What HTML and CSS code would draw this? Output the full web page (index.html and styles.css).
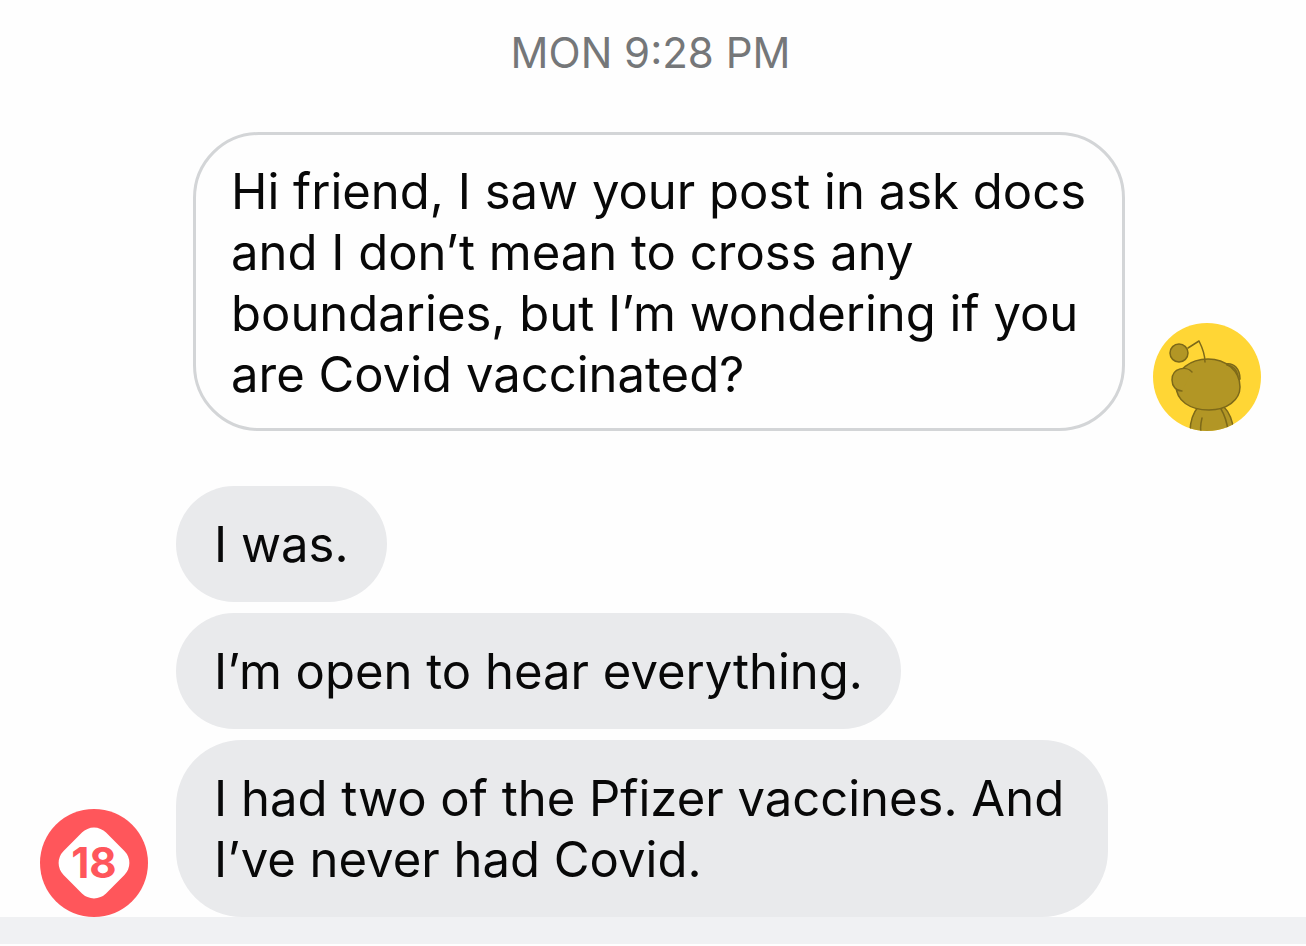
FILE: index.html
```html
<!DOCTYPE html>
<html lang="en">
<head>
  <meta charset="UTF-8" />
  <meta name="viewport" content="width=device-width, initial-scale=1.0"/>
  <title>Chat</title>
  <link rel="stylesheet" href="styles.css">
</head>
<body>
  <main class="chat">
    <time class="date">MON 9:28 PM</time>

    <div class="row sent">
      <p class="bubble">Hi friend, I saw your post in ask docs and I don’t mean to cross any boundaries, but I’m wondering if you are Covid vaccinated?</p>
      <svg class="avatar" viewBox="0 0 108 108" role="img" aria-label="My avatar">
        <defs>
          <clipPath id="round"><circle cx="54" cy="54" r="54"/></clipPath>
        </defs>
        <circle cx="54" cy="54" r="54" fill="#ffd635"/>
        <g clip-path="url(#round)" fill="#b29625" stroke="#7d6919" stroke-width="1.5" stroke-linecap="round" stroke-linejoin="round">
          <!-- body -->
          <path d="M45 84c-5 6-8 13-8 26h44c-1-11-4-20-10-26z"/>
          <path d="M49 95c-1 4-2 9-1 14M68 86c3 5 6 13 7 22" fill="none"/>
          <!-- ears and head -->
          <path d="M72 41c9-2 15 5 15 15l-4 4z"/>
          <path d="M55 36c18 0 32 12 32 28 0 13-13 23-31 23-19 0-33-9-33-25 0-15 14-26 32-26z"/>
          <path d="M39 49c-5-6-20-5-20 8 0 6 4 11 10 11"/>
          <path d="M74 42c6 1 10 5 11 11" fill="none"/>
          <!-- antenna -->
          <path d="M35 25l11-7c3 6 6 14 6 21" fill="none"/>
          <circle cx="26" cy="30" r="9"/>
        </g>
      </svg>
    </div>

    <div class="row received">
      <svg class="avatar" viewBox="0 0 108 108" role="img" aria-label="18">
        <circle cx="54" cy="54" r="54" fill="#ff565b"/>
        <rect x="24" y="24" width="60" height="60" rx="17" fill="#fff" transform="rotate(45 54 54)"/>
        <text class="badge" x="54" y="69" text-anchor="middle">18</text>
      </svg>
      <div class="group">
        <p class="bubble">I was.</p>
        <p class="bubble">I’m open to hear everything.</p>
        <p class="bubble">I had two of the Pfizer vaccines. And I’ve never had Covid.</p>
      </div>
    </div>
  </main>
  <footer class="bottom-bar"></footer>
</body>
</html>
```

FILE: styles.css
```css
* {
  box-sizing: border-box;
}

body {
  margin: 0;
  font-family: Inter, "Liberation Sans", sans-serif;
  background-color: #fefefe;
  color: #080808;
}

.chat {
  display: flex;
  flex-direction: column;
  padding: 29px 45px 0 40px;
}

.date {
  color: #757779;
  font-size: 42px;
  line-height: 48px;
  text-align: center;
  margin-bottom: 55px;
}

.row {
  display: flex;
  align-items: flex-end;
  gap: 28px;
}

.sent {
  justify-content: flex-end;
  margin-bottom: 55px;
}

.avatar {
  width: 108px;
  height: 108px;
  flex-shrink: 0;
}

.badge {
  font-size: 42px;
  font-weight: 700;
  fill: #ff565b;
}

.group {
  display: flex;
  flex-direction: column;
  align-items: flex-start;
  gap: 11px;
}

.bubble {
  margin: 0;
  max-width: 932px;
  padding: 28px 38px 27px;
  border-radius: 66px;
  font-size: 49px;
  line-height: 61px;
}

.sent .bubble {
  padding: 26px 30px 23px 35px;
  border: 3px solid #d3d5d7;
}

.received .bubble {
  background-color: #e9eaec;
}

.bottom-bar {
  height: 27px;
  background-color: #f0f1f3;
}
```
